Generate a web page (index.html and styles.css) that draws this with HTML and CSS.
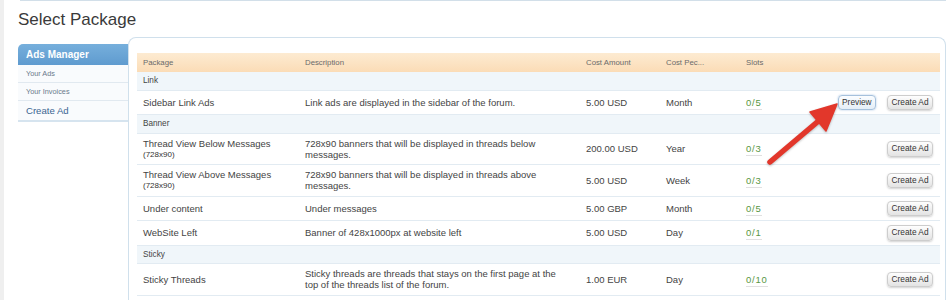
FILE: index.html
```html
<!DOCTYPE html>
<html>
<head>
<meta charset="utf-8">
<title>Select Package</title>
<link rel="stylesheet" href="styles.css">
</head>
<body>
<div class="page">
  <div class="topline"></div>
  <h1 class="title">Select Package</h1>
  <div class="layout">
    <nav class="sidebar">
      <div class="side-head">Ads Manager</div>
      <div class="side-item">Your Ads</div>
      <div class="side-item">Your Invoices</div>
      <div class="side-item big">Create Ad</div>
    </nav>
    <main class="box">
      <table class="packages">
        <colgroup>
          <col class="c-pkg"><col class="c-desc"><col class="c-cost"><col class="c-per"><col class="c-slots"><col class="c-act">
        </colgroup>
        <thead>
          <tr><th>Package</th><th>Description</th><th>Cost Amount</th><th>Cost Pec...</th><th>Slots</th><th></th></tr>
        </thead>
        <tbody>
          <tr class="cat"><td colspan="6">Link</td></tr>
          <tr>
            <td>Sidebar Link Ads</td>
            <td class="desc">Link ads are displayed in the sidebar of the forum.</td>
            <td>5.00 USD</td><td>Month</td>
            <td><span class="slots">0/5</span></td>
            <td class="act"><span class="btn preview">Preview</span><span class="btn">Create Ad</span></td>
          </tr>
          <tr class="cat"><td colspan="6">Banner</td></tr>
          <tr>
            <td>Thread View Below Messages<span class="dim">(728x90)</span></td>
            <td class="desc">728x90 banners that will be displayed in threads below messages.</td>
            <td>200.00 USD</td><td>Year</td>
            <td><span class="slots">0/3</span></td>
            <td class="act"><span class="btn">Create Ad</span></td>
          </tr>
          <tr>
            <td>Thread View Above Messages<span class="dim">(728x90)</span></td>
            <td class="desc">728x90 banners that will be displayed in threads above messages.</td>
            <td>5.00 USD</td><td>Week</td>
            <td><span class="slots">0/3</span></td>
            <td class="act"><span class="btn">Create Ad</span></td>
          </tr>
          <tr>
            <td>Under content</td>
            <td class="desc">Under messages</td>
            <td>5.00 GBP</td><td>Month</td>
            <td><span class="slots">0/5</span></td>
            <td class="act"><span class="btn">Create Ad</span></td>
          </tr>
          <tr>
            <td>WebSite Left</td>
            <td class="desc">Banner of 428x1000px at website left</td>
            <td>5.00 USD</td><td>Day</td>
            <td><span class="slots">0/1</span></td>
            <td class="act"><span class="btn">Create Ad</span></td>
          </tr>
          <tr class="cat"><td colspan="6">Sticky</td></tr>
          <tr>
            <td>Sticky Threads</td>
            <td class="desc">Sticky threads are threads that stays on the first page at the top of the threads list of the forum.</td>
            <td>1.00 EUR</td><td>Day</td>
            <td><span class="slots">0/10</span></td>
            <td class="act"><span class="btn">Create Ad</span></td>
          </tr>
        </tbody>
      </table>
    </main>
  </div>
</div>
<svg class="arrow" width="949" height="300" viewBox="0 0 949 300" xmlns="http://www.w3.org/2000/svg">
  <line x1="770" y1="162" x2="822" y2="118" stroke="#e2372b" stroke-width="5.5" stroke-linecap="round"/>
  <polygon points="837,104 810,112 826,131" fill="#e2372b" stroke="#e2372b" stroke-width="1.5" stroke-linejoin="round"/>
</svg>
</body>
</html>
```
FILE: styles.css
```css
html, body {
  margin: 0;
  padding: 0;
  background: #ffffff;
}
body {
  position: relative;
  font-family: "Liberation Sans", Arial, sans-serif;
  color: #444;
  width: 949px;
  height: 300px;
  overflow: hidden;
}
.page {
  border-left: 4px solid #efefef;
  padding: 0 3px 0 14px;
  height: 300px;
  box-sizing: border-box;
  overflow: hidden;
}
.topline {
  height: 1px;
  margin-left: 2px;
  background: #d2dfe9;
}
.title {
  margin: 9px 0 0 0;
  font-size: 17px;
  line-height: 20px;
  font-weight: normal;
  color: #3a3a3a;
}
.layout {
  display: flex;
  align-items: flex-start;
  margin-top: 7px;
}
.sidebar {
  width: 110px;
  flex: none;
  margin-top: 7px;
}
.side-head {
  height: 21px;
  line-height: 21px;
  padding-left: 8px;
  background: linear-gradient(#76afdc, #5f9bcf);
  border-radius: 5px 0 0 0;
  color: #fff;
  font-weight: bold;
  font-size: 10px;
}
.side-item {
  height: 17px;
  line-height: 17px;
  padding-left: 8px;
  border-bottom: 1px solid #e1e9f0;
  background: #f9fbfd;
  font-size: 7.3px;
  color: #6b7a8b;
}
.side-item.big {
  height: 19px;
  line-height: 19px;
  font-size: 9.6px;
  color: #3a6592;
  border-bottom: 2px solid #d6e4ef;
}
.box {
  flex: 1;
  height: 263px;
  box-sizing: border-box;
  overflow: hidden;
  border: 1px solid #d0e0ec;
  border-bottom: none;
  border-radius: 8px 8px 0 0;
  padding: 15px 5px 0 8px;
}
.packages {
  width: 100%;
  border-collapse: collapse;
  table-layout: fixed;
}
.c-pkg { width: 162px; }
.c-desc { width: 281px; }
.c-cost { width: 80px; }
.c-per { width: 80px; }
.c-slots { width: 80px; }
.packages th {
  text-align: left;
  font-weight: normal;
  font-size: 7.8px;
  color: #6a6a6a;
  padding: 4px 6px;
  line-height: 11px;
  background: linear-gradient(#fdebd2, #fbdcb6);
  white-space: nowrap;
}
.packages td {
  padding: 4px 6px;
  font-size: 9.5px;
  line-height: 11.25px;
  vertical-align: middle;
  border-bottom: 1px solid #e2ebf2;
  color: #444;
}
.packages td.desc {
  padding-right: 17px;
}
.packages tr.cat td {
  background: #f0f6fa;
  font-size: 8.2px;
  line-height: 9.5px;
  color: #444;
}
.dim {
  display: block;
  font-size: 8px;
  color: #333;
}
.slots {
  color: #579744;
  font-size: 9.5px;
  letter-spacing: 0.8px;
  padding-bottom: 1px;
  border-bottom: 1px solid #e0e0e0;
}
.packages td.act {
  text-align: right;
  padding-right: 7px;
  white-space: nowrap;
}
.btn {
  display: inline-block;
  vertical-align: middle;
  height: 13.5px;
  line-height: 13.5px;
  padding: 0 3.5px;
  font-size: 8.3px;
  color: #333;
  background: linear-gradient(#fefefe, #e3e3e3);
  border: 1px solid #cdcdcd;
  border-radius: 4px;
  box-shadow: 0 1px 2px rgba(0, 0, 0, 0.18);
}
.btn.preview {
  margin-right: 11px;
  border-color: #a6c1dc;
  background: linear-gradient(#fbfdff, #e5eef7);
  box-shadow: 0 0 2px rgba(90, 140, 200, 0.55);
}
.arrow {
  position: absolute;
  left: 0;
  top: 0;
  pointer-events: none;
  filter: drop-shadow(0 1px 1px rgba(0, 0, 0, 0.25));
}
```
